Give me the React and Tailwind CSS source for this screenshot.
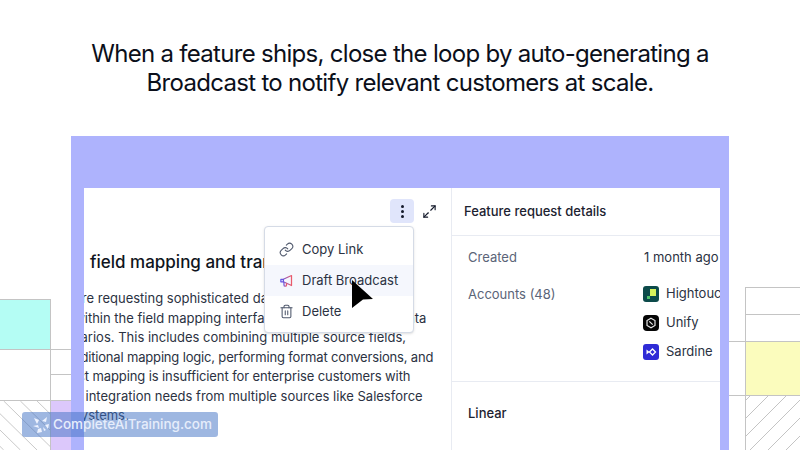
import React from 'react'
import { Link, Trash2, Maximize2 } from 'lucide-react'

// each line sits under the panel's left edge, so the start differs per line
const bodyLines = [
  { text: 'Users are requesting sophisticated data transformation', className: 'ml-[-49px]' },
  { text: 'capabilities within the field mapping interface to handle complex data', className: 'ml-[-83px]' },
  { text: 'scenarios. This includes combining multiple source fields,', className: 'ml-[-33px]' },
  { text: 'conditional mapping logic, performing format conversions, and', className: 'ml-[-26px] tracking-[-0.17px]' },
  { text: 'Direct mapping is insufficient for enterprise customers with', className: 'ml-[-31px] tracking-[-0.1px]' },
  { text: 'data integration needs from multiple sources like Salesforce', className: 'ml-[-29px]' },
  { text: 'systems.', className: 'ml-[-10px]' },
]

function Hatch({ flip, className }) {
  const lines = []
  for (let i = -50; i < 60; i += 18) {
    lines.push(
      flip
        ? <line key={i} x1={i} y1="54" x2={i + 54} y2="0" stroke="#c4c4c4" strokeWidth="1" />
        : <line key={i} x1={i} y1="0" x2={i + 54} y2="54" stroke="#c4c4c4" strokeWidth="1" />
    )
  }
  return (
    <svg className={className} viewBox="0 0 54 54" preserveAspectRatio="none">
      {lines}
    </svg>
  )
}

function Decorations() {
  return (
    <>
      {/* left side blocks */}
      <div className="absolute left-0 top-[299px] w-[51px] h-[51px] bg-[#b4fdf4] border border-l-0 border-[#c4c4c4]" />
      <div className="absolute left-0 top-[349px] w-[71px] h-px bg-[#c4c4c4]" />
      <div className="absolute left-[50px] top-[349px] w-px h-[101px] bg-[#c4c4c4]" />
      <div className="absolute left-[50px] top-[374px] w-[21px] h-px bg-[#c4c4c4]" />
      <div className="absolute left-0 top-[400px] w-[71px] h-px bg-[#c4c4c4]" />
      <Hatch className="absolute left-0 top-[401px] w-[50px] h-[49px]" />
      <div className="absolute left-[51px] top-[401px] w-[20px] h-[49px] bg-[#dcc8fb]" />
      {/* right side blocks */}
      <div className="absolute left-[745px] top-[287px] w-[55px] h-[55px] border border-r-0 border-[#c4c4c4]" />
      <div className="absolute left-[745px] top-[314px] w-[55px] h-px bg-[#c4c4c4]" />
      <div className="absolute left-[729px] top-[341px] w-[71px] h-px bg-[#c4c4c4]" />
      <div className="absolute left-[745px] top-[342px] w-[55px] h-[53px] bg-[#fbfcbd] border-l border-[#c4c4c4]" />
      <div className="absolute left-[729px] top-[395px] w-[71px] h-px bg-[#c4c4c4]" />
      <div className="absolute left-[745px] top-[396px] w-px h-[54px] bg-[#c4c4c4]" />
      <Hatch flip className="absolute left-[746px] top-[396px] w-[54px] h-[54px]" />
    </>
  )
}

function HightouchLogo() {
  return (
    <svg width="16" height="16" viewBox="0 0 16 16">
      <rect width="16" height="16" rx="3" fill="#0c4a4a" />
      <rect x="7" y="3" width="6" height="7" fill="#d6f25c" />
      <rect x="4" y="10" width="3" height="3" fill="#4fc26a" />
    </svg>
  )
}

function UnifyLogo() {
  return (
    <svg width="16" height="16" viewBox="0 0 16 16" fill="none">
      <rect width="16" height="16" rx="4" fill="#050505" />
      <path d="M8 3.2l4 2.3v5L8 12.8l-4-2.3v-5z" stroke="#e8e8e8" strokeWidth="1.2" />
      <path d="M6.3 6.3l3.4 3.4" stroke="#e8e8e8" strokeWidth="1.2" />
    </svg>
  )
}

function SardineLogo() {
  return (
    <svg width="16" height="16" viewBox="0 0 16 16" fill="none">
      <rect width="16" height="16" rx="3" fill="#2f2bd6" />
      <path d="M3.5 5.5v5l3-2.5z" fill="#fff" />
      <path d="M6.5 8l3-3 3 3-3 3z" stroke="#fff" strokeWidth="1.3" />
    </svg>
  )
}

function Cursor() {
  return (
    <svg className="absolute left-[351px] top-[280px]" width="23" height="29" viewBox="0 0 23 29">
      <path d="M1 0l21 19-10 .5-11 8.5z" fill="#000" />
    </svg>
  )
}

function Menu() {
  return (
    <div className="absolute left-[264px] top-[226px] w-[150px] h-[107px] bg-white border border-[#d5dbe6] rounded-[4px] shadow-sm py-[7px] text-[13px] text-[#2b3242]">
      <div className="h-[31px] flex items-center pl-[14px] gap-[8px]">
        <Link size={15} strokeWidth={1.7} className="text-[#4f586c]" />
        <span>Copy Link</span>
      </div>
      <div className="h-[31px] flex items-center pl-[14px] gap-[8px] bg-[#f5f7fd]">
        <svg width="15" height="15" viewBox="0 0 24 24" fill="none" strokeWidth="2" strokeLinecap="round" strokeLinejoin="round">
          <defs>
            <linearGradient id="mega" x1="0" y1="0" x2="1" y2="0">
              <stop offset="0" stopColor="#5d55e8" />
              <stop offset="1" stopColor="#ea5a6a" />
            </linearGradient>
          </defs>
          <path d="M3 10v4h4l13 6V4L7 10z" stroke="url(#mega)" />
          <path d="M7 10v4M8 15v4a2 2 0 0 0 4 0v-2" stroke="url(#mega)" />
        </svg>
        <span>Draft Broadcast</span>
      </div>
      <div className="h-[31px] flex items-center pl-[14px] gap-[8px]">
        <Trash2 size={15} strokeWidth={1.7} className="text-[#4f586c]" />
        <span>Delete</span>
      </div>
    </div>
  )
}

function Watermark() {
  return (
    <div className="absolute left-[22px] top-[412px] w-[196px] h-[25px] rounded-[3px] bg-[#3d6fc4]/50 flex items-center pl-[10px] gap-[3px]">
      <svg width="18" height="18" viewBox="0 0 18 18" fill="#eef3ff">
        <path d="M2 2l5 2-2 4zM15 1l-1 5-4-1zM1 10l5-1 1 3zM17 8l-1 5-3-4zM6 13l3-1 1 4-5 1zM11 11l3 3-2 1z" />
      </svg>
      <span className="text-[13.5px] font-medium text-[#e6edfb]">CompleteAiTraining.com</span>
    </div>
  )
}

export default function App() {
  return (
    <div className="relative w-[800px] h-[450px] overflow-hidden bg-white font-['Inter',sans-serif]">
      <Decorations />

      <h1 className="relative pt-[40px] h-[136px] text-center text-[24px] leading-[28.5px] tracking-[-0.7px] font-normal text-[#0b0f1a]">
        When a feature ships, close the loop by auto-generating a<br />
        Broadcast to notify relevant customers at scale.
      </h1>

      <div className="relative mx-[71px] h-[314px] bg-[#aeb3fd] pt-[52px] pl-[13px] pr-[9px]">
        <div className="h-[262px] bg-white flex">
          {/* left column */}
          <div className="w-[368px] shrink-0 overflow-hidden border-r border-[#e8ebf2]">
            <div className="h-[48px]" />
            <div className="pt-[14px] pl-[6px] h-[53px] text-[17px] leading-[24px] font-medium text-[#0f1420] whitespace-nowrap">
              field mapping and transformation
            </div>
            <div className="text-[13px] leading-[19.5px] text-[#2b3242] whitespace-nowrap">
              {bodyLines.map((line) => (
                <div key={line.text} className={line.className}>{line.text}</div>
              ))}
            </div>
          </div>

          {/* right column */}
          <div className="flex-1 min-w-0 overflow-hidden">
            <div className="h-[48px] flex items-center pt-[1px] pl-[12px] border-b border-[#e8ebf2] text-[13px] font-medium text-[#1c2230] whitespace-nowrap">
              Feature request details
            </div>
            <div className="h-[146px] border-b border-[#e8ebf2] pl-[16px] text-[13px] text-[#2b3242] whitespace-nowrap">
              <div className="flex pt-[12px] h-[47px]">
                <span className="w-[176px] text-[#5b6478]">Created</span>
                <span>1 month ago</span>
              </div>
              <div className="flex">
                <span className="w-[175px] shrink-0 text-[#5b6478] pt-[2px]">Accounts (48)</span>
                <div className="flex flex-col gap-[13px] pt-[3px]">
                  <div className="flex items-center gap-[7px] h-[16px]"><HightouchLogo /><span>Hightouch</span></div>
                  <div className="flex items-center gap-[7px] h-[16px]"><UnifyLogo /><span>Unify</span></div>
                  <div className="flex items-center gap-[7px] h-[16px]"><SardineLogo /><span>Sardine</span></div>
                </div>
              </div>
            </div>
            <div className="pl-[16px] pt-[22px] text-[13px] font-medium text-[#1c2230]">Linear</div>
          </div>
        </div>
      </div>

      {/* overlays */}
      <div className="absolute left-[390px] top-[199px] w-[24px] h-[24px] rounded-[4px] bg-[#e0e5fb] flex flex-col items-center justify-center gap-[2px]">
        <span className="w-[3px] h-[3px] rounded-full bg-[#141a2b]" />
        <span className="w-[3px] h-[3px] rounded-full bg-[#141a2b]" />
        <span className="w-[3px] h-[3px] rounded-full bg-[#141a2b]" />
      </div>
      <Maximize2 size={15} strokeWidth={1.8} className="absolute left-[422px] top-[204px] text-[#141a2b]" />
      <Menu />
      <Cursor />
      <Watermark />
    </div>
  )
}
